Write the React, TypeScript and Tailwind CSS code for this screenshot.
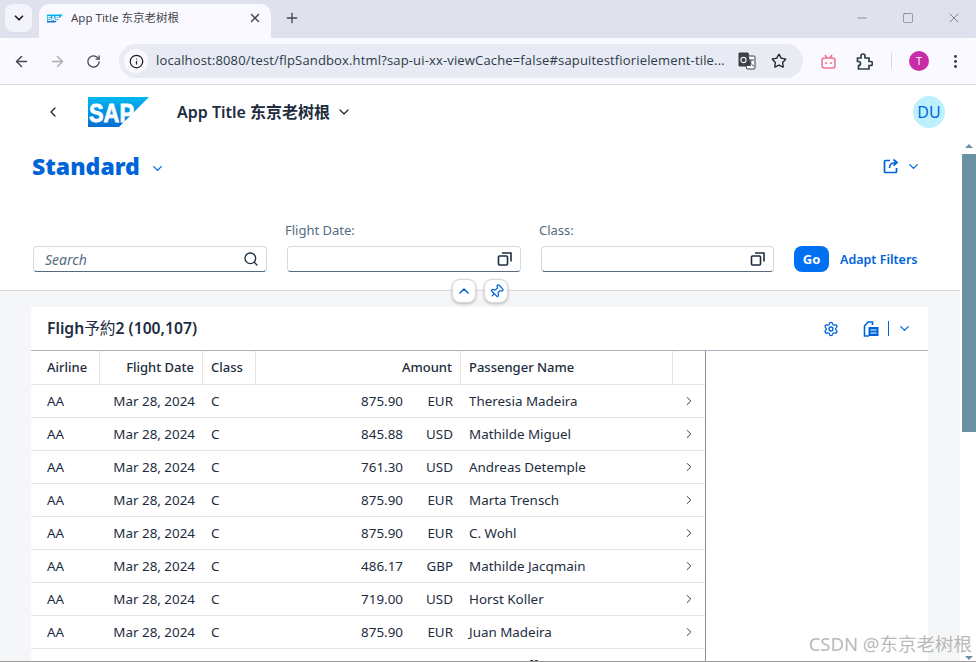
import React from "react";
import { ArrowLeft, ArrowRight, RotateCw, Info, Star, EllipsisVertical, Plus, X, ChevronDown, ChevronRight, ChevronLeft, ChevronUp, Search, Pin, Settings, Minus, Square } from "lucide-react";

const FONT = "font-['Noto_Sans','Noto_Sans_CJK_SC',sans-serif]";
const rows = [
  ["875.90", "EUR", "Theresia Madeira"],
  ["845.88", "USD", "Mathilde Miguel"],
  ["761.30", "USD", "Andreas Detemple"],
  ["875.90", "EUR", "Marta Trensch"],
  ["875.90", "EUR", "C. Wohl"],
  ["486.17", "GBP", "Mathilde Jacqmain"],
  ["719.00", "USD", "Horst Koller"],
  ["875.90", "EUR", "Juan Madeira"],
  ["571.27", "GBP", "Marta Hoffmann"],
];

function SapLogo({ w, h, id }: { w: number; h: number; id: string }) {
  return (
    <svg width={w} height={h} viewBox="0 0 61 30">
      <defs>
        <linearGradient id={id} x1="0" y1="0" x2="0" y2="1">
          <stop offset="0" stopColor="#00b8f1" />
          <stop offset="1" stopColor="#0a6ed1" />
        </linearGradient>
      </defs>
      <polygon points="0,0 61,0 31,30 0,30" fill={`url(#${id})`} />
      <text x="1" y="25" fontFamily="Liberation Sans" fontWeight="700" fontSize="26" fill="#fff" stroke="#fff" strokeWidth="0.8" textLength="45" lengthAdjust="spacingAndGlyphs">SAP</text>
    </svg>
  );
}

function ValueHelp() {
  return (
    <svg width="16" height="16" viewBox="0 0 16 16" fill="none" stroke="#1d2d3e" strokeWidth="1.6">
      <rect x="1.5" y="5" width="9" height="9" rx="1" />
      <path d="M5 2h9v8.5" />
    </svg>
  );
}

function Field({ label, w, children }: { label?: string; w: string; children?: React.ReactNode }) {
  return (
    <div className={`flex flex-col ${w}`}>
      {label && <div className="text-[13px] leading-[16px] text-[#556b82] mb-[8px] -ml-[2px]">{label}</div>}
      <div className="h-[26px] bg-white border border-[#d5dadd] border-b-[#556b81] rounded-[4px] flex items-center justify-between pl-[11px] pr-[7px]">
        {children}
      </div>
    </div>
  );
}

function HeadRow() {
  const cell = "flex items-center shrink-0 h-full border-r border-[#e5e5e5]";
  return (
    <div className="flex h-[34px] font-medium border-b border-[#e5e5e5] text-[13px] text-[#1d2d3e]">
      <div className={`${cell} w-[69px] pl-[16px]`}>Airline</div>
      <div className={`${cell} w-[103px] justify-end pr-[8px]`}>Flight Date</div>
      <div className={`${cell} w-[53px] pl-[8px]`}>Class</div>
      <div className={`${cell} w-[205px] justify-end pr-[8px]`}>Amount</div>
      <div className={`${cell} w-[212px] pl-[8px]`}>Passenger Name</div>
      <div className="flex-1" />
    </div>
  );
}

function DataRow({ amount, cur, name }: { amount: string; cur: string; name: string }) {
  const cell = "flex items-center shrink-0 h-full";
  return (
    <div className="flex h-[33px] border-b border-[#e5e5e5] text-[13.4px] text-[#1d2d3e]">
      <div className={`${cell} w-[69px] pl-[16px]`}>AA</div>
      <div className={`${cell} w-[103px] justify-end pr-[8px]`}>Mar 28, 2024</div>
      <div className={`${cell} w-[53px] pl-[8px]`}>C</div>
      <div className={`${cell} w-[205px] justify-end pr-[8px]`}>
        <span>{amount}</span>
        <span className="w-[50px] text-right">{cur}</span>
      </div>
      <div className={`${cell} w-[212px] pl-[8px]`}>{name}</div>
      <div className="flex-1 flex items-center justify-end pr-[9px]">
        <ChevronRight size={14} color="#1d2d3e" strokeWidth={1.6} />
      </div>
    </div>
  );
}

export default function App() {
  return (
    <div className={`h-[662px] w-[976px] overflow-hidden flex flex-col relative bg-white border-b border-[#9a9a9a] ${FONT}`}>
      {/* tab strip */}
      <div className="h-[38px] bg-[#dfe1ec] flex items-end shrink-0 relative">
        <div className="w-[27px] h-[28px] mb-[6px] ml-[5px] rounded-[8px] bg-[#f3f4fb] flex items-center justify-center">
          <ChevronDown size={14} strokeWidth={3} color="#1f1f1f" />
        </div>
        <div className="h-[34px] w-[232px] ml-[7px] bg-[#f9f9ff] rounded-t-[10px] flex items-center pl-[8px] pr-[9px] pb-[6px]">
          <SapLogo w={16} h={9} id="fav" />
          <span className="ml-[8px] flex-1 text-[11.5px] text-[#45474d] whitespace-nowrap">App Title 东京老树根</span>
          <X size={14} strokeWidth={2.5} color="#45474d" />
        </div>
        <div className="w-[42px] h-[34px] flex items-center justify-center pb-[6px]">
          <Plus size={16} strokeWidth={2} color="#45474d" />
        </div>
        <div className="ml-auto flex h-full items-center pb-[2px]">
          <div className="w-[46px] flex justify-center"><Minus size={14} strokeWidth={1} color="#555" /></div>
          <div className="w-[46px] flex justify-center"><Square size={12} strokeWidth={1} color="#555" /></div>
          <div className="w-[46px] flex justify-center mr-[-1px]"><X size={16} strokeWidth={1} color="#555" /></div>
        </div>
      </div>
      {/* toolbar */}
      <div className="h-[47px] bg-[#f9f9ff] border-b border-[#d9dbe3] flex items-center shrink-0 rounded-t-[8px]">
        <div className="w-[36px] ml-[3px] flex justify-center"><ArrowLeft size={17} color="#45474d" strokeWidth={2} /></div>
        <div className="w-[36px] flex justify-center"><ArrowRight size={17} color="#acaeb3" strokeWidth={2} /></div>
        <div className="w-[36px] flex justify-center"><RotateCw size={15} color="#45474d" strokeWidth={2} /></div>
        <div className="ml-[8px] w-[684px] h-[34px] rounded-full bg-[#e8ebf3] flex items-center pl-[5px] pr-[14px]">
          <div className="w-[24px] h-[24px] rounded-full bg-[#f9f9ff] flex items-center justify-center shrink-0">
            <Info size={15} color="#1f1f1f" strokeWidth={2} />
          </div>
          <span className="ml-[8px] text-[13px] text-[#2c3a4a] whitespace-nowrap tracking-[0.012em] w-[574px] overflow-hidden font-['Open_Sans','Noto_Sans',sans-serif]">localhost:8080/test/flpSandbox.html?sap-ui-xx-viewCache=false#sapuitestfiorielement-tile...</span>
          <svg className="ml-[8px] shrink-0" width="18" height="18" viewBox="0 0 18 18">
            <path d="M1 1h9l1 3h5a1 1 0 0 1 1 1v11a1 1 0 0 1-1 1H9l-1-3H1z" fill="#fff" stroke="#3c3f44" strokeWidth="1" />
            <path d="M1 1h9l3 13H1z" fill="#3c3f44" />
            <circle cx="5.5" cy="8" r="2.6" fill="none" stroke="#e8ebf3" strokeWidth="1.2" />
            <path d="M11 8h5M13 8c0 3-1 4-2 5M12 10c1 2 2 3 4 4" stroke="#3c3f44" fill="none" strokeWidth="1" />
          </svg>
          <Star className="ml-[15px] shrink-0" size={16} color="#1f2328" strokeWidth={2} />
        </div>
        <svg className="ml-[18px] shrink-0" width="15" height="15" viewBox="0 0 15 15" fill="none" stroke="#f5708f" strokeWidth="1.5">
          <rect x="1" y="4" width="13" height="10" rx="2.5" />
          <path d="M4 1l2 3M11 1L9 4" />
          <path d="M5 8v2M10 8v2" strokeWidth="1.6" />
        </svg>
        <svg className="ml-[20px] shrink-0" width="17" height="17" viewBox="0 0 17 17" fill="none" stroke="#2f3e4c" strokeWidth="1.7">
          <path d="M1.5 5h3.5V3a2 2 0 0 1 4 0v2h4v3.5h1.5a2 2 0 0 1 0 4H13V16H2.5v-3.5a2 2 0 0 0 0-4H1.5z" />
        </svg>
        <div className="ml-[18px] w-[1px] h-[16px] bg-[#c6dcf5]" />
        <div className="ml-[17px] w-[20px] h-[20px] rounded-full bg-[#c92ca6] text-white text-[10px] flex items-center justify-center">T</div>
        <EllipsisVertical className="ml-[18px]" size={17} color="#2f3e4c" strokeWidth={2.2} />
      </div>
      {/* shell */}
      <div className="h-[53px] flex items-center shrink-0 bg-white">
        <ChevronLeft className="ml-[45px]" size={16} color="#1d2d3e" strokeWidth={2} />
        <div className="ml-[27px] flex"><SapLogo w={61} h={30} id="logo" /></div>
        <span className="ml-[28px] text-[16px] font-semibold text-[#1d2d3e] whitespace-nowrap">App Title 东京老树根</span>
        <ChevronDown className="ml-[6px]" size={16} color="#1d2d3e" strokeWidth={2} />
        <div className="ml-auto mr-[31px] w-[32px] h-[32px] rounded-full bg-[#bdf0ff] text-[#0064d9] text-[16px] flex items-center justify-center">DU</div>
      </div>
      <div className="flex-1 flex min-h-0">
        <div className="flex-1 flex flex-col min-w-0 bg-[#f5f6f7]">
          {/* header */}
          <div className="bg-white h-[153px] border-b border-[#d9d9d9] relative shrink-0">
            <div className="flex items-center pl-[32px] pr-[39px] h-[56px]">
              <span className="text-[23px] font-black text-[#0064d9] leading-none">Standard</span>
              <ChevronDown className="ml-[10px] mt-[4px]" size={15} color="#0064d9" strokeWidth={2} />
              <svg className="ml-auto" width="16" height="16" viewBox="0 0 16 16" fill="none" stroke="#0064d9" strokeWidth="1.7">
                <path d="M7 2.5H2.5a1 1 0 0 0-1 1v10a1 1 0 0 0 1 1h10a1 1 0 0 0 1-1V10" />
                <path d="M6.5 10c0-3.5 2.5-5.5 6-5.5M10.5 1.5l3.5 3-3.5 3" />
              </svg>
              <ChevronDown className="ml-[7px]" size={15} color="#0064d9" strokeWidth={2} />
            </div>
            <div className="flex items-end pl-[33px] mt-[28px] gap-[20px]">
              <Field w="w-[234px]">
                <span className="text-[14px] italic text-[#556b82]">Search</span>
                <Search size={16} color="#1d2d3e" strokeWidth={2} />
              </Field>
              <Field w="w-[234px]" label="Flight Date:"><span /><ValueHelp /></Field>
              <Field w="w-[233px]" label="Class:"><span /><ValueHelp /></Field>
              <div className="h-[26px] w-[35px] rounded-[8px] bg-[#0070f2] text-white text-[13px] font-bold flex items-center justify-center pt-[1px]">Go</div>
              <span className="h-[26px] leading-[27px] -ml-[9px] text-[12.5px] font-semibold text-[#0064d9] whitespace-nowrap">Adapt Filters</span>
            </div>
            <div className="absolute left-[452px] top-[141px] flex gap-[8px]">
              <div className="w-[24px] h-[24px] bg-white rounded-[8px] border border-[#d5dadd] shadow-[0_1px_3px_rgba(0,0,0,0.25)] flex items-center justify-center">
                <ChevronUp size={16} color="#0064d9" strokeWidth={2.4} />
              </div>
              <div className="w-[24px] h-[24px] bg-white rounded-[8px] border border-[#d5dadd] shadow-[0_1px_3px_rgba(0,0,0,0.25)] flex items-center justify-center">
                <Pin size={15} color="#0064d9" strokeWidth={2} className="rotate-45" />
              </div>
            </div>
          </div>
          {/* card */}
          <div className="mt-[16px] ml-[31px] w-[897px] flex-1 bg-white flex flex-col min-h-0">
            <div className="h-[44px] flex items-center pl-[16px] pr-[16px] border-b border-[#a9b4be] shrink-0">
              <span className="text-[15.7px] font-semibold text-[#1d2d3e] whitespace-nowrap">Fligh<span className="font-normal">予約</span>2 (100,107)</span>
              <Settings className="ml-auto" size={16} color="#0064d9" strokeWidth={2} />
              <svg className="ml-[24px]" width="16" height="16" viewBox="0 0 16 16" fill="none" stroke="#0064d9" strokeWidth="1.6">
                <path d="M6 15H1.5V5L5 1h4.5v3" />
                <rect x="5.5" y="6" width="10" height="9" fill="#0064d9" stroke="none" />
                <path d="M7.5 9h6M7.5 12h6" stroke="#fff" strokeWidth="1.2" />
              </svg>
              <div className="ml-[9px] w-[1px] h-[15px] bg-[#0064d9]" />
              <ChevronDown className="ml-[8px]" size={15} color="#0064d9" strokeWidth={2} />
            </div>
            <div className="flex-1 min-h-0 overflow-hidden">
              <div className="w-[675px] border-r border-[#8a9299] h-full overflow-hidden">
                <HeadRow />
                {rows.map((r, i) => (
                  <DataRow key={i} amount={r[0]} cur={r[1]} name={r[2]} />
                ))}
              </div>
            </div>
          </div>
        </div>
        {/* scrollbar */}
        <div className="w-[16px] shrink-0 bg-white flex flex-col items-center pl-[2px]">
          <div className="mt-[6px] w-0 h-0 border-l-[4px] border-r-[4px] border-b-[4px] border-l-transparent border-r-transparent border-b-[#6a90a3]" />
          <div className="mt-[6px] w-full h-[278px] bg-[#6a90a3]" />
          <div className="mt-auto mb-[1px] w-0 h-0 border-l-[4px] border-r-[4px] border-t-[4px] border-l-transparent border-r-transparent border-t-[#6a90a3]" />
        </div>
      </div>
      <div className="absolute right-[4px] bottom-[5px] text-[18.5px] leading-[24px] text-[#9a9a9a]/70 whitespace-nowrap">CSDN @东京老树根</div>
    </div>
  );
}
